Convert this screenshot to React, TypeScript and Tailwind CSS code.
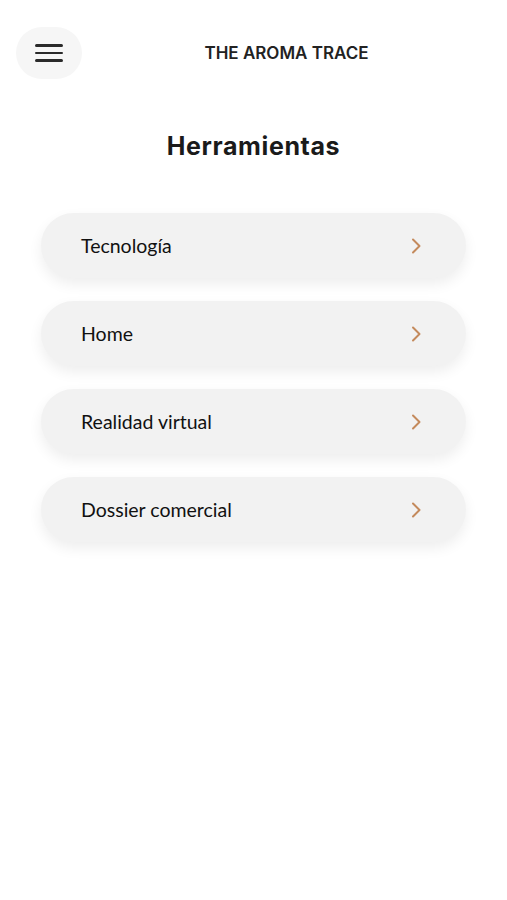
import React from "react";

const items = ["Tecnología", "Home", "Realidad virtual", "Dossier comercial"];

function Chevron() {
  return (
    <svg width="12" height="18" viewBox="0 0 12 18" fill="none" className="shrink-0">
      <path d="M3 2.5l6.5 6.5L3 15.5" stroke="#c48a5c" strokeWidth="2" strokeLinecap="round" strokeLinejoin="round" />
    </svg>
  );
}

export default function App() {
  return (
    <div className="min-h-[900px] w-full bg-white font-['Lato',sans-serif] text-[#111]">
      {/* Header */}
      <header className="flex items-center px-4 pt-[27px]">
        <button className="flex h-[52px] w-[66px] flex-col items-center justify-center gap-[5px] rounded-full bg-[#f6f6f6]">
          <span className="block h-[2.5px] w-[28px] rounded bg-[#2a2a2a]" />
          <span className="block h-[2.5px] w-[28px] rounded bg-[#2a2a2a]" />
          <span className="block h-[2.5px] w-[28px] rounded bg-[#2a2a2a]" />
        </button>
        <div className="flex-1 pt-[2px] text-center font-['Inter',sans-serif] text-[17px] font-semibold text-[#222]">
          THE AROMA TRACE
        </div>
      </header>

      <h1 className="mt-[52px] text-center font-['Inter',sans-serif] text-[25px] font-bold leading-[30px] tracking-[0.6px] text-[#1a1a1a]">
        Herramientas
      </h1>

      <ul className="mt-[52px] flex flex-col gap-[23px] px-[41px]">
        {items.map((label) => (
          <li
            key={label}
            className="flex h-[65px] items-center justify-between rounded-full bg-[#f2f2f2] pl-[40px] pr-[44px] shadow-[0_6px_14px_rgba(0,0,0,0.07)]"
          >
            <span className="text-[19.5px] text-[#111]">{label}</span>
            <Chevron />
          </li>
        ))}
      </ul>
    </div>
  );
}
